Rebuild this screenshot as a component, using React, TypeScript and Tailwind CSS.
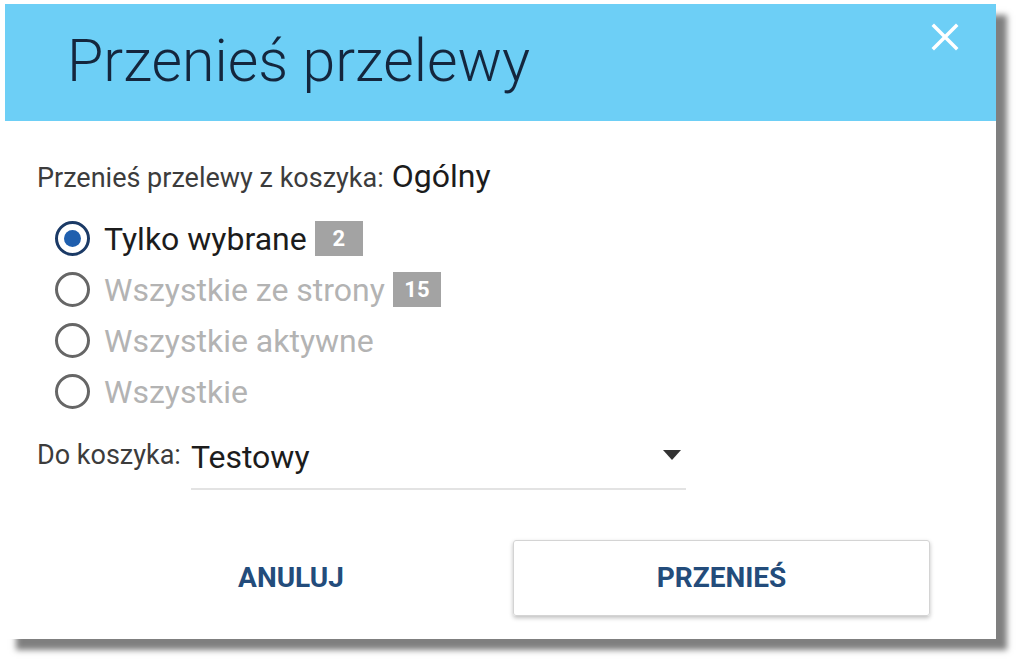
import React from 'react';

const font = { fontFamily: 'Roboto, "Liberation Sans", sans-serif' };

interface OptionProps {
  label: string;
  count?: number;
  checked?: boolean;
}

const RadioOption: React.FC<OptionProps> = ({ label, count, checked }) => {
  return (
    <div className="flex items-center h-[51px]">
      {checked ? (
        <span className="w-[35px] h-[35px] rounded-full border-[3px] border-[#1b3a66] flex items-center justify-center">
          <span className="w-[17px] h-[17px] rounded-full bg-[#1f5fae]" />
        </span>
      ) : (
        <span className="w-[35px] h-[35px] rounded-full border-[3px] border-[#666666]" />
      )}
      <span className={`ml-[14px] text-[32px] ${checked ? 'text-[#1c1c1c]' : 'text-[#b3b3b3]'}`}>{label}</span>
      {count !== undefined && (
        <span className="ml-[8px] w-[48px] h-[35px] bg-[#a3a3a3] text-white text-[22px] font-bold flex items-center justify-center">
          {count}
        </span>
      )}
    </div>
  );
};

export default function App() {
  return (
    <div className="w-[1024px] h-[668px] bg-white pt-[4px] pl-[5px]" style={font}>
      <div className="relative w-[991px] h-[635px] bg-white shadow-[11px_11px_6px_rgba(0,0,0,0.5)] flex flex-col">
        <div className="h-[117px] bg-[#6dcff6] flex items-center pl-[62px] shrink-0">
          <h1 className="text-[59px] font-light text-[#14263d] leading-none -mt-[4px]">Przenieś przelewy</h1>
        </div>
        <button className="absolute top-[17px] right-[35px] w-[32px] h-[32px] flex items-center justify-center">
          <svg width="28" height="28" viewBox="0 0 28 28" fill="none" stroke="white" strokeWidth="3.5" strokeLinecap="square">
            <path d="M3 3 L25 25 M25 3 L3 25" />
          </svg>
        </button>

        <div className="pl-[32px] pr-[60px] pt-[31px] flex flex-col">
          <div className="flex items-baseline">
            <span className="text-[27px] text-[#3c3c3c]">Przenieś przelewy z koszyka:</span>
            <span className="ml-[8px] text-[32px] text-[#1c1c1c]">Ogólny</span>
          </div>

          <div className="pl-[18px] mt-[13px] flex flex-col">
            <RadioOption label="Tylko wybrane" count={2} checked />
            <RadioOption label="Wszystkie ze strony" count={15} />
            <RadioOption label="Wszystkie aktywne" />
            <RadioOption label="Wszystkie" />
          </div>

          <div className="flex items-end mt-[18px]">
            <span className="text-[27px] text-[#3c3c3c] pb-[14px]">Do koszyka:</span>
            <div className="ml-[10px] w-[495px] border-b-[2px] border-[#e3e3e3] flex items-center justify-between h-[52px] pb-[11px]">
              <span className="text-[32px] text-[#1c1c1c]">Testowy</span>
              <svg width="18" height="10" viewBox="0 0 18 10" className="mr-[5px] mb-[4px]">
                <path d="M0 0 H18 L9 10 Z" fill="#333333" />
              </svg>
            </div>
          </div>
        </div>

        <div className="flex items-center mt-auto mb-[23px] pl-[181px]">
          <button className="w-[210px] h-[76px] text-[28px] font-bold text-[#234c7b]">ANULUJ</button>
          <button className="ml-[117px] w-[417px] h-[76px] border border-[#d4d4d4] rounded-[3px] shadow-[0_2px_4px_rgba(0,0,0,0.25)] text-[28px] font-bold text-[#234c7b]">
            PRZENIEŚ
          </button>
        </div>
      </div>
    </div>
  );
}
